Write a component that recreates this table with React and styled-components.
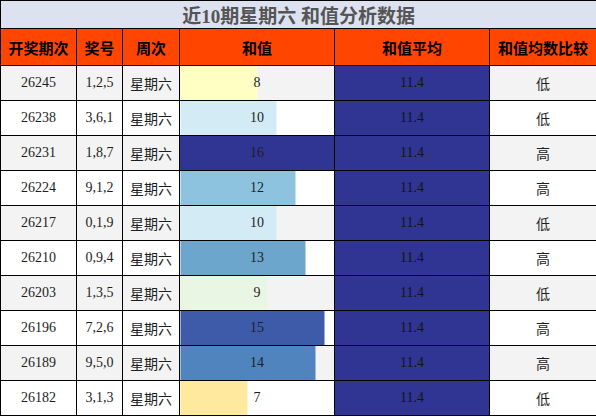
import React from "react";
import styled, { createGlobalStyle } from "styled-components";

const GlobalStyle = createGlobalStyle`
  html, body {
    margin: 0;
    padding: 0;
    background: #fff;
  }
`;

const rows = [
  { issue: "26245", nums: "1,2,5", sum: 8, color: "#ffffc4", cmp: "低" },
  { issue: "26238", nums: "3,6,1", sum: 10, color: "#d3ebf5", cmp: "低" },
  { issue: "26231", nums: "1,8,7", sum: 16, color: "#303593", cmp: "高" },
  { issue: "26224", nums: "9,1,2", sum: 12, color: "#8ec3e0", cmp: "高" },
  { issue: "26217", nums: "0,1,9", sum: 10, color: "#d3ebf5", cmp: "低" },
  { issue: "26210", nums: "0,9,4", sum: 13, color: "#6da6cd", cmp: "高" },
  { issue: "26203", nums: "1,3,5", sum: 9, color: "#eaf6e4", cmp: "低" },
  { issue: "26196", nums: "7,2,6", sum: 15, color: "#3e5ba9", cmp: "高" },
  { issue: "26189", nums: "9,5,0", sum: 14, color: "#4f84bf", cmp: "高" },
  { issue: "26182", nums: "3,1,3", sum: 7, color: "#fee99f", cmp: "低" },
];

const MAX = 16;

const Table = styled.table`
  width: 596px;
  border-collapse: collapse;
  table-layout: fixed;
  font-family: "Liberation Serif", "Noto Sans CJK SC", serif;
  color: #1e1e1e;
`;

const TitleCell = styled.th`
  height: 27px;
  padding: 0;
  background: #dde2f1;
  color: #555;
  font-size: 19px;
  font-weight: bold;
  border: 1px solid #000;
  text-align: center;
`;

const HeadCell = styled.th`
  height: 36px;
  padding: 0;
  background: #ff4500;
  color: #000;
  font-family: "Noto Sans CJK SC", sans-serif;
  font-size: 15px;
  font-weight: bold;
  border: 1px solid #000;
  text-align: center;
`;

const Row = styled.tr`
  background: ${({ $alt }) => ($alt ? "#f3f3f3" : "#fff")};
`;

const Cell = styled.td`
  height: 34px;
  padding: 0;
  border: 1px solid #000;
  text-align: center;
  font-size: 14px;
  white-space: nowrap;
  font-family: ${({ $cjk }) =>
    $cjk ? '"Noto Sans CJK SC", sans-serif' : '"Liberation Serif", "Noto Sans CJK SC", serif'};
`;

const AvgCell = styled(Cell)`
  background: #303593;
  color: #141414;
`;

export default function App() {
  return (
    <>
      <GlobalStyle />
      <Table>
        <colgroup>
          <col style={{ width: 76 }} />
          <col style={{ width: 46 }} />
          <col style={{ width: 57 }} />
          <col style={{ width: 155 }} />
          <col style={{ width: 155 }} />
          <col style={{ width: 107 }} />
        </colgroup>
        <thead>
          <tr>
            <TitleCell colSpan={6}>近10期星期六 和值分析数据</TitleCell>
          </tr>
          <tr>
            <HeadCell>开奖期次</HeadCell>
            <HeadCell>奖号</HeadCell>
            <HeadCell>周次</HeadCell>
            <HeadCell>和值</HeadCell>
            <HeadCell>和值平均</HeadCell>
            <HeadCell>和值均数比较</HeadCell>
          </tr>
        </thead>
        <tbody>
          {rows.map((r, i) => {
            const pct = (r.sum / MAX) * 100;
            return (
              <Row key={r.issue} $alt={i % 2 === 0}>
                <Cell>{r.issue}</Cell>
                <Cell>{r.nums}</Cell>
                <Cell $cjk>星期六</Cell>
                <Cell
                  style={{
                    background: `linear-gradient(to right, ${r.color} ${pct}%, transparent ${pct}%)`,
                  }}
                >
                  {r.sum}
                </Cell>
                <AvgCell>11.4</AvgCell>
                <Cell $cjk>{r.cmp}</Cell>
              </Row>
            );
          })}
        </tbody>
      </Table>
    </>
  );
}
